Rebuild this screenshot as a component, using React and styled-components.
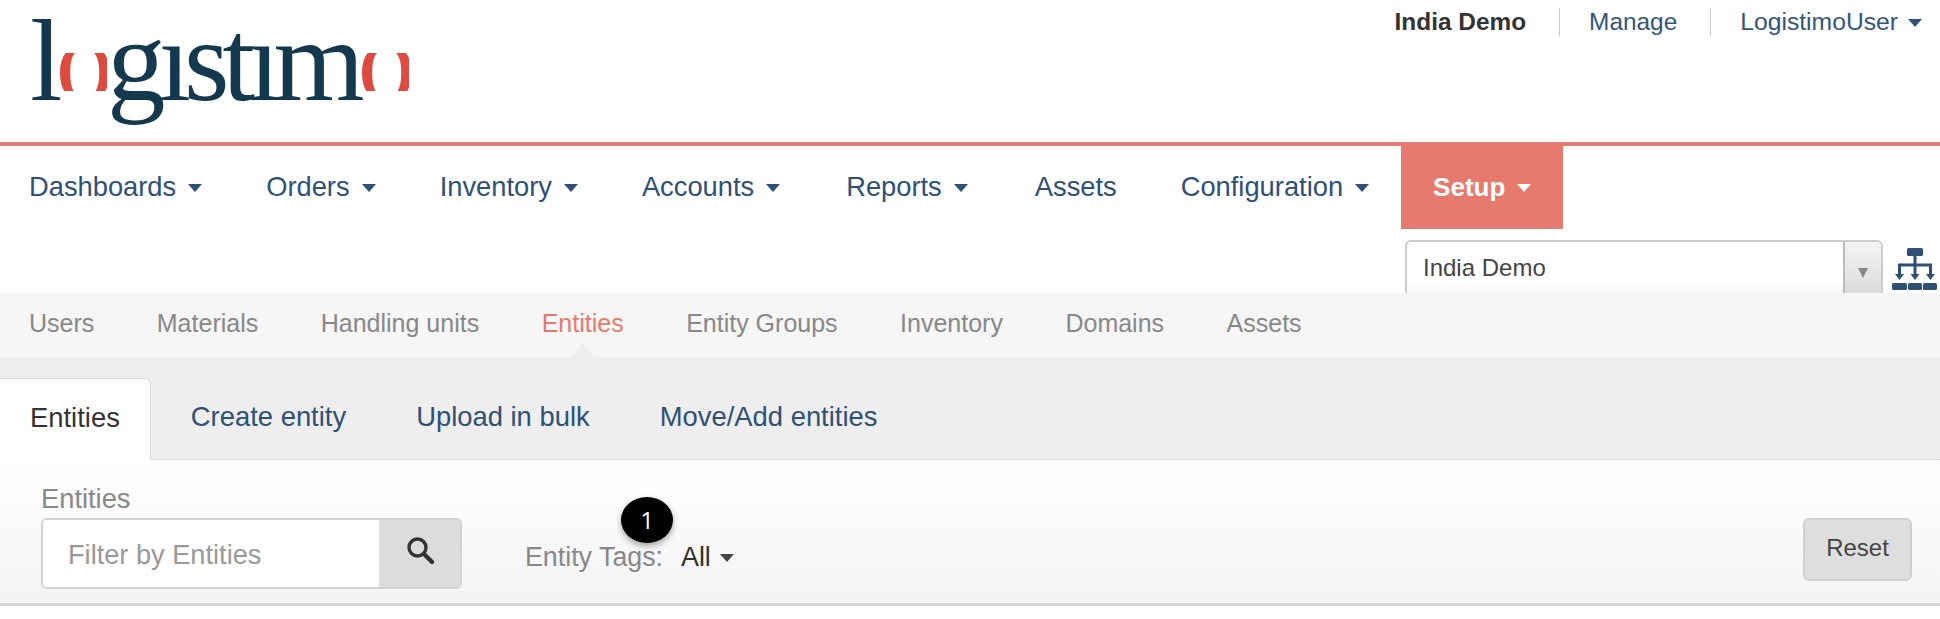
import React from 'react';
import styled, { createGlobalStyle } from 'styled-components';

const GlobalStyle = createGlobalStyle`
  html, body {
    margin: 0;
    padding: 0;
    background: #fff;
    font-family: "Liberation Sans", Arial, sans-serif;
    overflow: hidden;
  }
`;

const Page = styled.div`
  width: 1940px;
  height: 619px;
  overflow: hidden;
`;

const Header = styled.header`
  display: flex;
  justify-content: space-between;
  height: 142px;
  border-bottom: 4px solid #e67a6e;
`;

const Logo = styled.div`
  padding: 0 10px 0 30px;
  font-family: "Liberation Serif", serif;
  font-size: 117px;
  line-height: 122px;
  letter-spacing: -7px;
  color: #14384e;
  filter: blur(0.5px);
`;

const LogoO = styled.span`
  color: transparent;
  background: linear-gradient(
    transparent 0,
    transparent 44.5%,
    #dd4a40 44.5%,
    #dd4a40 73.5%,
    transparent 73.5%
  );
  -webkit-background-clip: text;
  background-clip: text;
`;

const TopLinks = styled.nav`
  display: flex;
  align-items: flex-start;
  padding: 8px 18px 0 0;
  font-size: 24.4px;
  line-height: 28px;
`;

const TopLink = styled.span`
  display: flex;
  align-items: center;
  gap: 10px;
  height: 28px;
  padding: 0 33px 0 29px;
  color: ${(p) => (p.$strong ? '#333' : '#34557a')};
  font-weight: ${(p) => (p.$strong ? 'bold' : 'normal')};
  border-right: ${(p) => (p.$last ? 'none' : '1px solid #ccc')};
  ${(p) => p.$last && 'padding-right: 0; font-size: 24.7px;'}
`;

const Caret = styled.i`
  display: inline-block;
  border-top: 8px solid ${(p) => p.$color || '#2f5175'};
  border-left: 7px solid transparent;
  border-right: 7px solid transparent;
  margin-top: 2px;
`;

const MainNav = styled.nav`
  display: flex;
  height: 83px;
`;

const MainItem = styled.a`
  display: flex;
  align-items: center;
  gap: 12px;
  padding: 0 32px 1px;
  font-size: ${(p) => (p.$active ? '26px' : '27.3px')};
  color: ${(p) => (p.$active ? '#fff' : '#2f5175')};
  background: ${(p) => (p.$active ? '#e67a6e' : 'transparent')};
  font-weight: ${(p) => (p.$active ? 'bold' : 'normal')};

  &:first-child {
    padding-left: 29px;
  }

  &:nth-child(4) {
    padding-right: 34px;
  }

  &:nth-child(5) {
    padding-right: 35px;
  }
`;

const SelectRow = styled.div`
  display: flex;
  justify-content: flex-end;
  gap: 9px;
  height: 64px;
  padding-right: 3px;
  overflow: hidden;
`;

const DomainSelect = styled.div`
  display: flex;
  justify-content: space-between;
  width: 478px;
  height: 70px;
  margin-top: 11px;
  box-sizing: border-box;
  border: 2px solid #ccc;
  border-radius: 6px;
  background: linear-gradient(#fff 60%, #eee);
  overflow: hidden;
`;

const SelectText = styled.span`
  padding: 12px 0 0 16px;
  font-size: 24px;
  line-height: 28px;
  color: #444;
`;

const SelectArrow = styled.span`
  display: flex;
  justify-content: center;
  width: 36px;
  padding-top: 26px;
  border-left: 2px solid #bbb;
  background: linear-gradient(#f4f4f4, #d4d4d4);

  &::after {
    content: '';
    height: 0;
    border-top: 10px solid #888;
    border-left: 5px solid transparent;
    border-right: 5px solid transparent;
  }
`;

const TreeIcon = styled.svg`
  width: 45px;
  height: 42px;
  margin-top: 19px;
  color: #2f5175;
  flex: none;
`;

const SubNav = styled.nav`
  position: relative;
  display: flex;
  align-items: center;
  gap: 62.5px;
  height: 64px;
  padding: 0 0 3px 29px;
  box-sizing: border-box;
  background: #f6f6f6;
`;

const SubItem = styled.a`
  position: relative;
  font-size: 25px;
  color: ${(p) => (p.$active ? '#e67a6e' : '#888')};

  ${(p) =>
    p.$active &&
    `&::after {
      content: '';
      position: absolute;
      left: 50%;
      bottom: -19px;
      margin-left: -11px;
      border-bottom: 14px solid #eee;
      border-left: 11px solid transparent;
      border-right: 11px solid transparent;
    }`}
`;

const TabBar = styled.div`
  display: flex;
  align-items: flex-end;
  height: 103px;
  background: #eee;
  border-bottom: 1px solid #ddd;
  box-sizing: border-box;
`;

const Tab = styled.a`
  display: flex;
  align-items: center;
  height: 81px;
  box-sizing: border-box;
  padding: 0 35px 4px;
  font-size: 27.4px;
  color: ${(p) => (p.$active ? '#333' : '#2f5175')};
  background: ${(p) => (p.$active ? '#fff' : 'transparent')};

  &:nth-child(2) {
    padding-left: 40px;
  }

  ${(p) =>
    p.$active &&
    `border: 1px solid #ddd;
     border-left: none;
     border-bottom: none;
     border-radius: 0 6px 0 0;
     margin-bottom: -1px;
     height: 82px;
     padding-left: 30px;
     padding-right: 30px;`}
`;

const FilterPanel = styled.section`
  position: relative;
  display: flex;
  align-items: flex-start;
  height: 146px;
  box-sizing: border-box;
  padding: 24px 28px 0 41px;
  background: linear-gradient(#fff, #f4f4f4);
  border-bottom: 3px solid #d6d6d6;
`;

const Field = styled.div`
  display: flex;
  flex-direction: column;
  gap: 4px;
`;

const FieldLabel = styled.label`
  font-size: 27.3px;
  line-height: 30px;
  color: #888;
`;

const SearchGroup = styled.div`
  display: flex;
  width: 421px;
  height: 71px;
  box-sizing: border-box;
  border: 2px solid #d2d2d2;
  border-radius: 6px;
  overflow: hidden;
`;

const SearchInput = styled.span`
  flex: 1;
  padding-left: 25px;
  font-size: 27.2px;
  line-height: 69px;
  color: #999;
  background: #fff;
`;

const SearchButton = styled.span`
  display: flex;
  align-items: center;
  justify-content: center;
  width: 81px;
  padding-bottom: 8px;
  box-sizing: border-box;
  background: #dcdcdc;
  color: #333;
`;

const Tags = styled.div`
  display: flex;
  align-items: center;
  margin: 56px 0 0 63px;
  height: 34px;
  font-size: 26.8px;
  color: #888;
`;

const TagValue = styled.span`
  display: flex;
  align-items: center;
  gap: 9px;
  margin-left: 18px;
  color: #333;
`;

const Badge = styled.span`
  position: absolute;
  left: 621px;
  top: 37px;
  width: 52px;
  height: 46px;
  border-radius: 50%;
  background: #000;
  color: #fff;
  font-family: "Open Sans", sans-serif;
  font-size: 24px;
  line-height: 46px;
  text-align: center;
  box-shadow: 0 3px 6px rgba(0, 0, 0, 0.35);
`;

const ResetButton = styled.button`
  margin: 34px 0 0 auto;
  width: 109px;
  height: 63px;
  padding-bottom: 4px;
  border: 2px solid #d0d0d0;
  border-radius: 6px;
  background: #dedede;
  font-family: inherit;
  font-size: 24px;
  color: #444;
`;

const mainItems = [
  ['Dashboards', true],
  ['Orders', true],
  ['Inventory', true],
  ['Accounts', true],
  ['Reports', true],
  ['Assets', false],
  ['Configuration', true],
];

const subItems = ['Users', 'Materials', 'Handling units', 'Entities', 'Entity Groups', 'Inventory', 'Domains', 'Assets'];

export default function App() {
  return (
    <Page>
      <GlobalStyle />
      <Header>
        <Logo>
          l<LogoO>o</LogoO>gıstım<LogoO>o</LogoO>
        </Logo>
        <TopLinks>
          <TopLink $strong>India Demo</TopLink>
          <TopLink>Manage</TopLink>
          <TopLink $last>
            LogistimoUser <Caret />
          </TopLink>
        </TopLinks>
      </Header>
      <MainNav>
        {mainItems.map(([label, hasCaret]) => (
          <MainItem key={label}>
            {label}
            {hasCaret && <Caret />}
          </MainItem>
        ))}
        <MainItem $active>
          Setup <Caret $color="#fff" />
        </MainItem>
      </MainNav>
      <SelectRow>
        <DomainSelect>
          <SelectText>India Demo</SelectText>
          <SelectArrow />
        </DomainSelect>
        <TreeIcon viewBox="0 0 45 42" fill="currentColor">
          <rect x="15" y="0" width="16" height="8" rx="1.5" />
          <rect x="21.5" y="8" width="3" height="10" />
          <rect x="6" y="15.5" width="34" height="3" />
          <rect x="6" y="16" width="3" height="12" />
          <rect x="21.5" y="16" width="3" height="12" />
          <rect x="37" y="16" width="3" height="12" />
          <path d="M3 26h9l-4.5 6zM18.5 26h9l-4.5 6zM34 26h9l-4.5 6z" />
          <rect x="0" y="35" width="15" height="7" rx="1.5" />
          <rect x="16" y="35" width="14" height="7" rx="1.5" />
          <rect x="31" y="35" width="14" height="7" rx="1.5" />
        </TreeIcon>
      </SelectRow>
      <SubNav>
        {subItems.map((label) => (
          <SubItem key={label} $active={label === 'Entities'}>
            {label}
          </SubItem>
        ))}
      </SubNav>
      <TabBar>
        <Tab $active>Entities</Tab>
        <Tab>Create entity</Tab>
        <Tab>Upload in bulk</Tab>
        <Tab>Move/Add entities</Tab>
      </TabBar>
      <FilterPanel>
        <Field>
          <FieldLabel>Entities</FieldLabel>
          <SearchGroup>
            <SearchInput>Filter by Entities</SearchInput>
            <SearchButton>
              <svg width="30" height="30" viewBox="0 0 30 30" fill="none" stroke="currentColor">
                <circle cx="12.5" cy="12.5" r="8.5" strokeWidth="3.4" />
                <path d="M19 19l8 8" strokeWidth="4.4" strokeLinecap="round" />
              </svg>
            </SearchButton>
          </SearchGroup>
        </Field>
        <Tags>
          Entity Tags:
          <TagValue>
            All <Caret $color="#444" />
          </TagValue>
        </Tags>
        <Badge>1</Badge>
        <ResetButton>Reset</ResetButton>
      </FilterPanel>
    </Page>
  );
}
